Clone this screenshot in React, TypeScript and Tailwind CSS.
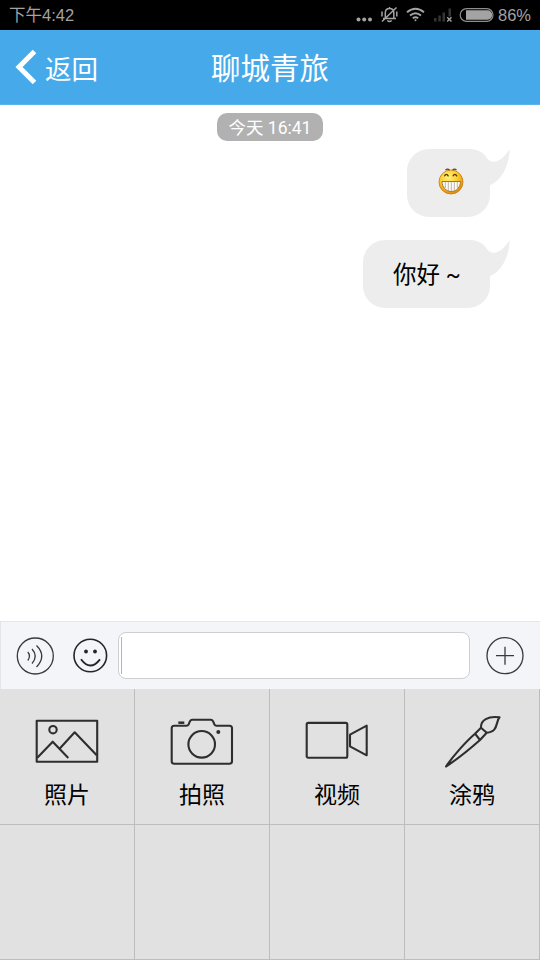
import React from "react";

const cjk = "font-['Roboto','Noto_Sans_CJK_SC',sans-serif]";

function StatusBar() {
  return (
    <div className="flex h-[30px] shrink-0 items-center bg-black pl-[9px] pr-[9px] text-[#a3a3a3] font-['Liberation_Sans','Noto_Sans_CJK_SC',sans-serif]">
      <span className="text-[16.5px] leading-[30px] whitespace-nowrap">下午4:42</span>
      <svg className="ml-auto mr-[4px]" width="138" height="30" viewBox="356 0 138 30" fill="none">
        <g fill="#a3a3a3">
          <circle cx="358.500" cy="19.500" r="2" />
          <circle cx="364.200" cy="19.500" r="2" />
          <circle cx="370" cy="19.500" r="2" />
        </g>
        <g stroke="#a3a3a3" strokeWidth="1.5">
          <path d="M383 18.500h13M385.300 18v-5c0-6 8.500-6 8.500 0v5M389.500 7v2M387.300 20.500q2.200 2 4.400 0M396.500 7.500L382 21.500" />
          <path d="M382 11.500v5M396.800 11.500v5" />
        </g>
        <g stroke="#a3a3a3" strokeWidth="2">
          <path d="M407 12.300q8.500-7 17 0M410 15.500q5.500-4.500 11 0M412.800 18.300q2.700-2 5.400 0" />
          <circle cx="415.500" cy="20.300" r="1" fill="#a3a3a3" stroke="none" />
        </g>
        <g fill="#343434">
          <path d="M434 18h2.500v3.500H434zM438.300 15.500h2.500v6h-2.500zM442.500 12.500h2.500v9h-2.500zM448.500 8.500h2.500v8h-2.500z" />
        </g>
        <path d="M447.200 17.200l4.300 4.300m0-4.300l-4.300 4.300" stroke="#a3a3a3" strokeWidth="1.400" />
        <rect x="460.200" y="8.700" width="32.800" height="12.600" rx="6.300" stroke="#8d8d8d" strokeWidth="1.200" />
        <path d="M466 10.300h21.500a4.700 4.700 0 0 1 0 9.400H466z" fill="#a3a3a3" />
      </svg>
      <span className="text-[16.5px] leading-[30px]">86%</span>
    </div>
  );
}

function Header() {
  return (
    <header className="grid h-[75px] shrink-0 grid-cols-[1fr_auto_1fr] items-center border-b border-[#5db5ec] bg-[#46aaea] text-white">
      <button className="flex items-center pl-[15px]">
        <svg width="22" height="36" viewBox="0 0 22 36" fill="none" stroke="white" strokeWidth="5">
          <path d="M19.500 2.500L4 18l15.500 15.500" />
        </svg>
        <span className="ml-[8px] pt-[5px] text-[26.5px] leading-[40px]">返回</span>
      </button>
      <h1 className="pt-[4px] text-[29.5px] leading-[40px]">聊城青旅</h1>
    </header>
  );
}

function GrinEmoji() {
  return (
    <svg width="26" height="28" viewBox="0 0 26 28">
      <defs>
        <radialGradient id="face" cx="0.4" cy="0.3" r="0.7">
          <stop offset="0" stopColor="#fff27a" />
          <stop offset="0.55" stopColor="#fccb2b" />
          <stop offset="1" stopColor="#e48b08" />
        </radialGradient>
      </defs>
      <circle cx="13" cy="15" r="12" fill="url(#face)" stroke="#c57a12" strokeWidth="0.8" />
      <path d="M7.500 3.200q2-2.200 4 0M14.500 3.200q2-2.200 4 0" fill="none" stroke="#6b4310" strokeWidth="1.200" />
      <path d="M6.300 9.300q2-3.800 4.200 0M14.800 9.300q2-3.800 4.200 0" fill="none" stroke="#5c3705" strokeWidth="1.300" />
      <path d="M4 14.500h18.500c0 5-3.500 10-9.200 10S4 19.500 4 14.500z" fill="#fffdf3" stroke="#9c6720" strokeWidth="0.900" />
      <path d="M7.300 15v6M10.300 15v9M13.300 15v9.500M16.300 15v9M19.300 15v6" stroke="#aaa195" strokeWidth="0.800" />
    </svg>
  );
}

function Bubble({ children }: { children: React.ReactNode }) {
  return (
    <div className="relative flex h-[68px] items-center rounded-[22px] bg-[#ededed] px-[30px]">
      {children}
      <svg className="absolute top-0 -right-[20px]" width="42" height="40" viewBox="-10 0 42 40" fill="#ededed">
        <path d="M-10 0C-3 0 2 2 5 4.500C9 8 10 12.700 16 12.700C22 12.500 27 7 31.700 0C31.500 14 25 31 11.500 36.500L-4 30Z" />
      </svg>
    </div>
  );
}

function PhotoIcon() {
  return (
    <>
      <path d="M2.700 6.700h60.500v41H2.700z" />
      <circle cx="19" cy="15.700" r="3.700" />
      <path d="M3.300 43.700l15.400-16L34.300 44M26 34.300l14.700-16 22 23" />
    </>
  );
}

function CameraIcon() {
  return (
    <>
      <path d="M5.200 11.700h12.300q1.500 0 2.200-1.500l1.300-3q.7-1.500 2.200-1.500h18.600q1.500 0 2.200 1.500l1.300 3q.7 1.500 2.200 1.500h13q2.500 0 2.500 2.500v33q0 2.500-2.500 2.500H5.200q-2.500 0-2.500-2.500v-33q0-2.500 2.500-2.500z" />
      <circle cx="32.700" cy="30.300" r="13.300" />
      <circle cx="49.300" cy="18" r="2" fill="#2e2e2e" stroke="none" />
      <path d="M9.300 8.700h6" strokeWidth="2.500" />
    </>
  );
}

function VideoIcon() {
  return (
    <>
      <rect x="2.700" y="8.900" width="40.600" height="34.800" rx="1.500" />
      <path d="M46 20.700l16.700-9v29.600L46 32.300z" />
    </>
  );
}

function BrushIcon() {
  return (
    <>
      <path d="M7 52.500C14 42 27 27.500 36 19.700l6-6C41.500 6 49 1.800 60.500 3.300C56.500 8 59.500 18 47.700 18.700L41 26C32 34 17 46 7 52.500z" />
      <path d="M36 19.700l5 6.300M42 13.700l5.700 5" />
    </>
  );
}

const tools = [
  { label: "照片", icon: <PhotoIcon /> },
  { label: "拍照", icon: <CameraIcon /> },
  { label: "视频", icon: <VideoIcon /> },
  { label: "涂鸦", icon: <BrushIcon /> },
];

function InputBar() {
  return (
    <div className="flex h-[68px] shrink-0 items-center border-t border-l border-t-[#e4e6e8] border-l-[#e4e6e8] bg-[#f3f5f8]">
      <button className="ml-[15px]">
        <svg width="38" height="38" viewBox="0 0 38 38" fill="none" stroke="#3a3a3a" strokeWidth="1.300">
          <circle cx="19.300" cy="19" r="18" />
          <path d="M11.800 15q3.300 4 0 8.500M16 12q6.500 7 0 14.500M20.500 8.500q10.500 10.500 0 21.500" />
        </svg>
      </button>
      <button className="ml-[18px]">
        <svg width="36" height="36" viewBox="0 0 36 36" fill="none" stroke="#252525" strokeWidth="1.600">
          <circle cx="18.300" cy="17.500" r="16.300" />
          <path d="M9 21.300q9.300 12.500 19 0" strokeWidth="1.900" />
          <g fill="#252525" stroke="none">
            <circle cx="14" cy="13.500" r="1.900" />
            <circle cx="23" cy="13.500" r="1.900" />
          </g>
        </svg>
      </button>
      <div className="ml-[10px] flex h-[47px] w-[352px] items-center rounded-[8px] border-[1.5px] border-[#cdcfd2] bg-white pl-[2px]">
        <span className="h-[37px] w-px bg-[#b5b5b5]" />
      </div>
      <button className="ml-[16px]">
        <svg width="38" height="38" viewBox="0 0 38 38" fill="none" stroke="#3a3a3a" strokeWidth="1.300">
          <circle cx="19" cy="18.700" r="18" />
          <path d="M10 18.700h18M19 9.700v18" />
        </svg>
      </button>
    </div>
  );
}

export default function App() {
  return (
    <div className={`${cjk} flex h-[960px] w-[540px] flex-col overflow-hidden bg-white`}>
      <StatusBar />
      <Header />

      <main className="flex flex-1 flex-col items-end pr-[50px]">
        <div className="mt-[8px] mr-[167px] flex h-[28px] w-[106px] items-center justify-center rounded-[10px] bg-[#b1b1b1] pt-[2px] text-[17.5px] text-white">
          今天 16:41
        </div>
        <div className="mt-[8px] flex flex-col items-end gap-[23px]">
          <Bubble>
            <span className="-mr-[4px] ml-px pb-[5px]">
              <GrinEmoji />
            </span>
          </Bubble>
          <Bubble>
            <span className="w-[67px] pt-[4px] text-[23.5px] whitespace-nowrap text-black">
              你好 <span className="relative -top-px text-[22px]">~</span>
            </span>
          </Bubble>
        </div>
      </main>

      <InputBar />

      <div className="grid h-[271px] shrink-0 grid-cols-4 grid-rows-[136px_135px] bg-[#e1e1e1]">
        {tools.map((tool) => (
          <button key={tool.label} className="flex flex-col items-center border-r border-b border-[#bdbdbd] pt-[25px]">
            <svg width="66" height="56" viewBox="0 0 66 56" fill="none" stroke="#2e2e2e" strokeWidth="2.100" strokeLinejoin="round">
              {tool.icon}
            </svg>
            <span className="mt-[10px] text-[23px] leading-[32px] text-black">{tool.label}</span>
          </button>
        ))}
        {tools.map((tool) => (
          <div key={tool.label} className="border-r border-b border-[#bdbdbd]" />
        ))}
      </div>
    </div>
  );
}
